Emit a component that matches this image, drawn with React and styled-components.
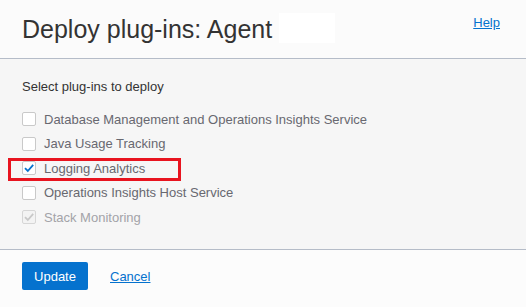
import React from "react";
import styled, { createGlobalStyle } from "styled-components";

const plugins = [
	{ name: "Database Management and Operations Insights Service" },
	{ name: "Java Usage Tracking" },
	{ name: "Logging Analytics", checked: true, highlight: true },
	{ name: "Operations Insights Host Service" },
	{ name: "Stack Monitoring", checked: true, disabled: true }
];

const Check = ({ color }) => (
	<svg width="12" height="12" viewBox="0 0 12 12">
		<path d="M2 6.2 L4.8 9 L10.2 2.8" fill="none" stroke={color} strokeWidth="1.8" />
	</svg>
);

const App = () => (
	<>
		<GlobalStyle />
		<Dialog>
			<Header>
				<TitleRow>
					<Title>Deploy plug-ins: Agent</Title>
					<Redacted />
				</TitleRow>
				<Link href="#">Help</Link>
			</Header>
			<Body>
				<Prompt>Select plug-ins to deploy</Prompt>
				<List>
					{plugins.map(p => (
						<Row key={p.name}>
							{p.highlight && <Highlight />}
							<Box $disabled={p.disabled}>
								{p.checked && <Check color={p.disabled ? "#c8c8c8" : "#0572ce"} />}
							</Box>
							<Label $disabled={p.disabled}>{p.name}</Label>
						</Row>
					))}
				</List>
			</Body>
			<Footer>
				<Button>Update</Button>
				<Link href="#">Cancel</Link>
			</Footer>
		</Dialog>
	</>
);

export default App;

const GlobalStyle = createGlobalStyle`
	body {
		margin: 0;
		font-family: "Liberation Sans", Arial, sans-serif;
		background: #f6f6f6;
	}
`
const Dialog = styled.div`
	width: 526px;
	height: 307px;
	display: flex;
	flex-direction: column;
	background: #f6f6f6;
`
const Header = styled.header`
	height: 58px;
	box-sizing: border-box;
	display: flex;
	justify-content: space-between;
	align-items: flex-start;
	padding: 0 26px 0 22px;
	background: #fbfbfb;
	border-bottom: 1px solid #b5bcc8;
	box-sizing: content-box;
`
const TitleRow = styled.div`
	display: flex;
	align-items: flex-start;
	padding-top: 13px;
`
const Title = styled.h1`
	margin: 1px 0 0;
	font-size: 25px;
	line-height: 30px;
	font-weight: normal;
	color: #333;
`
const Redacted = styled.span`
	width: 56px;
	height: 30px;
	margin-left: 7px;
	background: #ffffff;
`
const Link = styled.a`
	font-size: 13px;
	line-height: 16px;
	color: #0572ce;
	text-decoration: underline;
	${Header} & {
		margin-top: 15px;
	}
`
const Body = styled.main`
	height: 191px;
	box-sizing: border-box;
	padding: 20px 22px 0;
	border-bottom: 1px solid #b5bcc8;
`
const Prompt = styled.div`
	font-size: 13px;
	line-height: 16px;
	color: #333;
`
const List = styled.ul`
	list-style: none;
	margin: 12px 0 0;
	padding: 0;
`
const Row = styled.li`
	position: relative;
	display: flex;
	align-items: center;
	height: 24.5px;
`
const Highlight = styled.span`
	position: absolute;
	left: -14px;
	top: 2px;
	width: 173px;
	height: 23px;
	box-sizing: border-box;
	border: 3px solid #e8141f;
`
const Box = styled.span`
	width: 14px;
	height: 14px;
	box-sizing: border-box;
	display: flex;
	align-items: center;
	justify-content: center;
	border: 1px solid ${p => (p.$disabled ? "#d6d6d6" : "#c9c9c9")};
	border-radius: 2px;
	background: ${p => (p.$disabled ? "#f3f3f3" : "#fff")};
`
const Label = styled.span`
	margin-left: 8px;
	font-size: 13px;
	color: ${p => (p.$disabled ? "#a3a3a8" : "#686870")};
`
const Footer = styled.footer`
	flex: 1;
	display: flex;
	align-items: flex-start;
	gap: 22px;
	padding: 12px 22px 0;
	background: #fcfcfc;
	a {
		margin-top: 7px;
	}
`
const Button = styled.button`
	width: 66px;
	height: 28px;
	border: none;
	border-radius: 2px;
	background: #0572ce;
	color: #fff;
	font-family: inherit;
	font-size: 13px;
	padding: 0;
`
